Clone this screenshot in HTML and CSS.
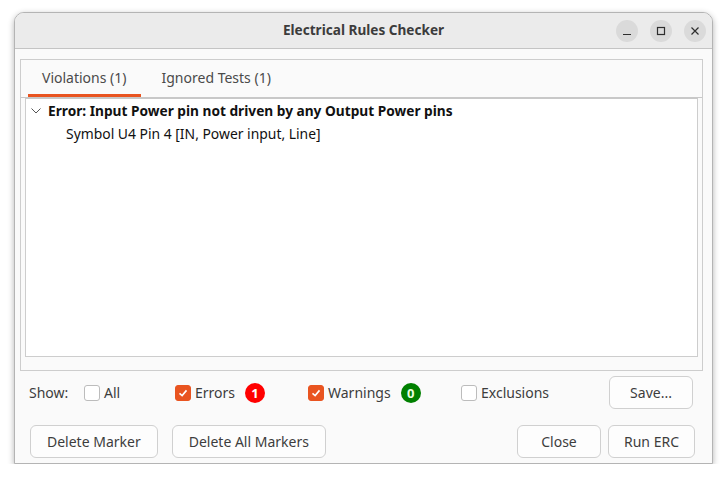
FILE: index.html
```html
<!DOCTYPE html>
<html lang="en">
<head>
  <meta charset="UTF-8" />
  <title>Electrical Rules Checker</title>
  <link rel="stylesheet" href="styles.css">
</head>
<body>
  <div class="window">
    <header class="titlebar">
      <span></span>
      <span class="title">Electrical Rules Checker</span>
      <div class="controls">
        <button class="ctl" title="Minimize">
          <svg width="10" height="10" viewBox="0 0 10 10"><line x1="1" y1="8.5" x2="9" y2="8.5" /></svg>
        </button>
        <button class="ctl" title="Maximize">
          <svg width="10" height="10" viewBox="0 0 10 10"><rect x="1.5" y="1.5" width="7" height="7" /></svg>
        </button>
        <button class="ctl" title="Close">
          <svg width="10" height="10" viewBox="0 0 10 10"><path d="M1.5 1.5 L8.5 8.5 M8.5 1.5 L1.5 8.5" /></svg>
        </button>
      </div>
    </header>

    <main class="content">
      <section class="notebook">
        <nav class="tabs">
          <div class="tab active">Violations (1)</div>
          <div class="tab">Ignored Tests (1)</div>
        </nav>
        <div class="page">
          <div class="tree">
            <div class="row parent">
              <svg class="chevron" width="10" height="6" viewBox="0 0 10 6"><polyline points="0.5,0.5 5,5 9.5,0.5" /></svg>
              <span>Error: Input Power pin not driven by any Output Power pins</span>
            </div>
            <div class="row child">Symbol U4 Pin 4 [IN, Power input, Line]</div>
          </div>
        </div>
      </section>

      <div class="filters">
        <span class="group show">Show:</span>
        <label class="group all"><span class="check"></span>All</label>
        <label class="group errors">
          <span class="check on"><svg viewBox="0 0 16 16"><polyline points="4,8.5 7,11 12,5" /></svg></span>
          Errors <span class="badge red">1</span>
        </label>
        <label class="group warnings">
          <span class="check on"><svg viewBox="0 0 16 16"><polyline points="4,8.5 7,11 12,5" /></svg></span>
          Warnings <span class="badge green">0</span>
        </label>
        <label class="group exclusions"><span class="check"></span>Exclusions</label>
        <button class="btn save">Save...</button>
      </div>

      <div class="actions">
        <button class="btn">Delete Marker</button>
        <button class="btn">Delete All Markers</button>
        <span class="spacer"></span>
        <button class="btn">Close</button>
        <button class="btn run">Run ERC</button>
      </div>
    </main>
  </div>
</body>
</html>
```

FILE: styles.css
```css
body {
  margin: 0;
  background: #ffffff;
  font-family: 'Noto Sans', 'Open Sans', sans-serif;
  font-size: 14px;
  color: #3d3d3d;
}

.window {
  width: 699px;
  margin: 12px 0 0 14px;
  border: 1px solid #b4b4b4;
  border-radius: 10px 10px 0 0;
  box-sizing: border-box;
  overflow: hidden;
  box-shadow: 0 2px 6px rgba(0, 0, 0, 0.3);
  background: #fafafa;
}

/* title bar */
.titlebar {
  height: 36px;
  box-sizing: border-box;
  background: #ebebeb;
  border-bottom: 1px solid #c4c4c4;
  display: grid;
  grid-template-columns: 1fr auto 1fr;
  align-items: center;
}

.title {
  font-weight: 700;
  font-size: 13.6px;
  color: #3c3c3c;
  padding-bottom: 2px;
}

.controls {
  justify-self: end;
  display: flex;
  gap: 12px;
  margin-right: 6px;
}

.ctl {
  width: 22px;
  height: 22px;
  padding: 0;
  border: none;
  border-radius: 50%;
  background: #dadada;
  display: flex;
  align-items: center;
  justify-content: center;
}

.ctl svg {
  fill: none;
  stroke: #2e2e2e;
  stroke-width: 1.2;
}

/* main area */
.content {
  padding: 10px 9px 5px 5px;
}

.notebook {
  height: 312px;
  box-sizing: border-box;
  border: 1px solid #cdcdcd;
  display: flex;
  flex-direction: column;
}

.tabs {
  display: flex;
  gap: 7px;
  height: 38px;
  box-sizing: border-box;
  padding-left: 7px;
  border-bottom: 1px solid #c8c8c8;
}

.tab {
  padding: 0 14px;
  display: flex;
  align-items: center;
  color: #4a4a4a;
  border-bottom: 3px solid transparent;
  box-sizing: border-box;
}

.tab.active {
  border-bottom-color: #e95420;
}

.page {
  flex: 1;
  padding: 0 4px 13px 4px;
  display: flex;
}

.tree {
  flex: 1;
  background: #ffffff;
  border: 1px solid #cdcdcd;
  border-top: 1px solid #c8c8c8;
  color: #111111;
}

.row {
  height: 23px;
  display: flex;
  align-items: center;
}

.parent {
  font-weight: 700;
  font-size: 13.7px;
  padding-left: 5px;
  gap: 7px;
}

.chevron {
  fill: none;
  stroke: #555555;
  stroke-width: 1;
}

.child {
  padding-left: 40px;
  font-size: 13.9px;
}

/* filter row */
.filters {
  display: flex;
  align-items: center;
  margin-top: 5px;
  padding-left: 9px;
  padding-right: 10px;
}

.group {
  display: flex;
  align-items: center;
  flex: 0 0 auto;
}

.show { width: 55px; }
.all { width: 91px; }
.errors { width: 133px; }
.warnings { width: 153px; }
.exclusions { flex: 1; }

.check {
  width: 16px;
  height: 16px;
  box-sizing: border-box;
  border: 1px solid #bcbcbc;
  border-radius: 3px;
  background: #ffffff;
  margin-right: 4px;
  display: flex;
}

.check.on {
  background: #e95420;
  border-color: #e95420;
}

.check svg {
  width: 14px;
  height: 14px;
  fill: none;
  stroke: #ffffff;
  stroke-width: 1.8;
}

.badge {
  width: 20px;
  height: 20px;
  border-radius: 50%;
  margin-left: 10px;
  color: #ffffff;
  font-weight: 700;
  font-size: 13px;
  display: flex;
  align-items: center;
  justify-content: center;
}

.badge.red { background: #ff0000; }
.badge.green { background: #008000; color: #eaffe0; }

/* buttons */
.btn {
  height: 33px;
  min-width: 84px;
  padding: 0 16px;
  font-family: inherit;
  font-size: 14px;
  color: #3d3d3d;
  background: #fdfdfd;
  border: 1px solid #d0d0d0;
  border-radius: 6px;
}

.actions {
  display: flex;
  gap: 14px;
  margin-top: 16px;
  padding-left: 10px;
  padding-right: 8px;
}

.spacer { flex: 1; }

.actions .run {
  margin-left: -7px;
  padding: 0 15px;
}
```
